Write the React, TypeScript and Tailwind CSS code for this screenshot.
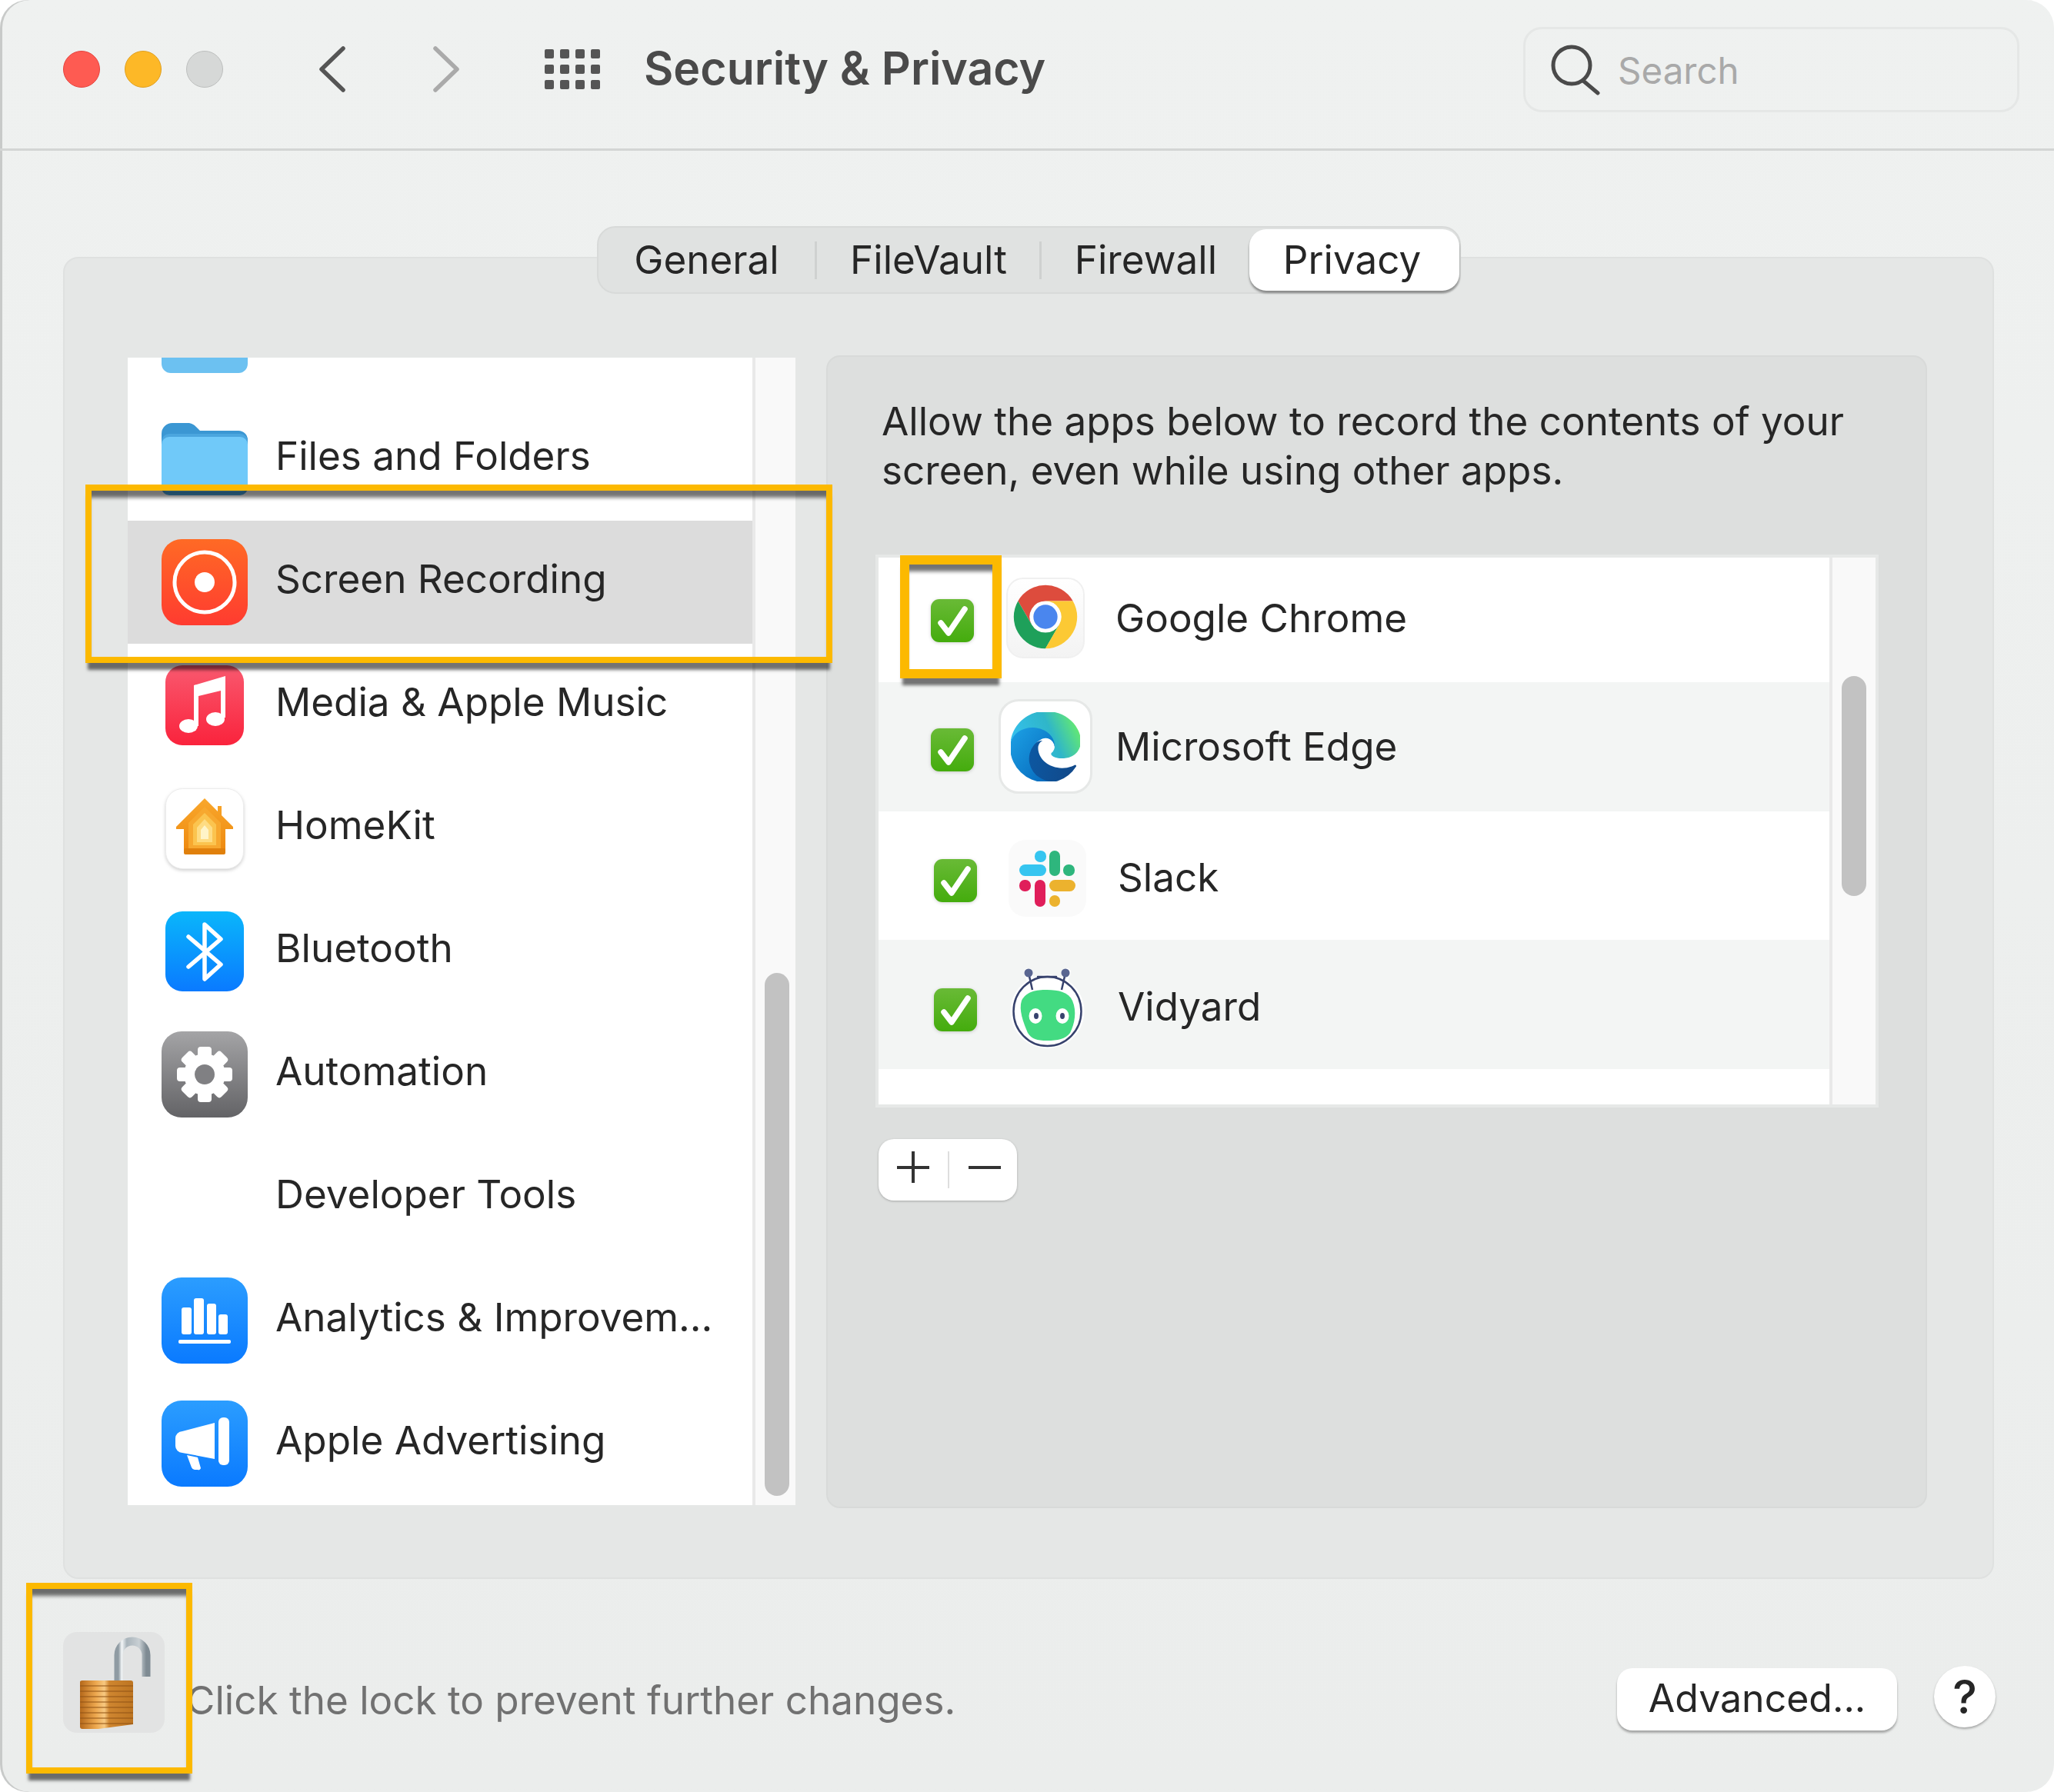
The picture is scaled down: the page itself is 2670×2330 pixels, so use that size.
import type { ReactNode } from "react";

const FolderIcon = () => (
  <svg width="112" height="94" viewBox="0 0 112 94">
    <path d="M0 14a14 14 0 0 1 14-14h20c6 0 9 3 13 7l3 3h50a12 12 0 0 1 12 12v60H0Z" fill="#3b97d3" />
    <path d="M0 24a10 10 0 0 1 10-10h92a10 10 0 0 1 10 10v60a10 10 0 0 1-10 10H10A10 10 0 0 1 0 84Z" fill="#4ba6df" />
    <path d="M0 28a10 10 0 0 1 10-10h92a10 10 0 0 1 10 10v53a8 8 0 0 1-8 8H8a8 8 0 0 1-8-8Z" fill="#70c9f9" />
  </svg>
);

const RecordIcon = () => (
  <svg width="112" height="112" viewBox="0 0 112 112">
    <defs>
      <linearGradient id="rec" x1="0" y1="0" x2="0" y2="1">
        <stop offset="0" stopColor="#ff6a25" />
        <stop offset="1" stopColor="#ff3b30" />
      </linearGradient>
    </defs>
    <rect width="112" height="112" rx="26" fill="url(#rec)" />
    <circle cx="56" cy="56" r="39" fill="none" stroke="#fff" strokeWidth="5" />
    <circle cx="56" cy="56" r="13" fill="#fff" />
  </svg>
);

const MusicIcon = () => (
  <svg width="102" height="104" viewBox="0 0 102 104">
    <defs>
      <linearGradient id="music" x1="0" y1="0" x2="0" y2="1">
        <stop offset="0" stopColor="#f9596f" />
        <stop offset="1" stopColor="#fa233c" />
      </linearGradient>
    </defs>
    <rect width="102" height="104" rx="22" fill="url(#music)" />
    <path d="M37 26 78 14v54h-6V33L43 40v39h-6Z" fill="#fff" />
    <ellipse cx="30" cy="79" rx="12" ry="9" fill="#fff" />
    <ellipse cx="65" cy="70" rx="12" ry="9" fill="#fff" />
  </svg>
);

const HomeIcon = () => (
  <svg width="102" height="105" viewBox="0 0 102 105" className="drop-shadow-[0_2px_2px_rgba(0,0,0,0.18)]">
    <defs>
      <linearGradient id="house" x1="0" y1="0" x2="0" y2="1">
        <stop offset="0" stopColor="#f9a72c" />
        <stop offset="1" stopColor="#ee8a10" />
      </linearGradient>
    </defs>
    <rect x="0.5" y="0.5" width="101" height="104" rx="22" fill="#fff" stroke="#ececec" />
    <path d="M51 13 68 30V23h5v12l15 15v3H78v27H24V53H14v-3Z" fill="url(#house)" />
    <path d="M51 24 72 45v33H30V45Z" fill="#f7a82f" />
    <path d="M51 32 66 47v27H36V47Z" fill="#fbc44f" />
    <path d="M51 40 61 51v19H41V51Z" fill="#fedc83" />
    <path d="M51 48 56 54v12H46V54Z" fill="#fff4c8" />
    <rect x="24" y="78" width="54" height="8" rx="2" fill="#e0800c" />
  </svg>
);

const BluetoothIcon = () => (
  <svg width="102" height="104" viewBox="0 0 102 104">
    <defs>
      <linearGradient id="bt" x1="0" y1="0" x2="0" y2="1">
        <stop offset="0" stopColor="#0ab6fb" />
        <stop offset="1" stopColor="#0a7aff" />
      </linearGradient>
    </defs>
    <rect width="102" height="104" rx="22" fill="url(#bt)" />
    <path d="M30 33 72 69 51 88V17l21 19-42 36" fill="none" stroke="#fff" strokeWidth="5.5" strokeLinecap="round" strokeLinejoin="round" />
  </svg>
);

const GearIcon = () => (
  <svg width="112" height="112" viewBox="0 0 112 112">
    <defs>
      <linearGradient id="gear" x1="0" y1="0" x2="0" y2="1">
        <stop offset="0" stopColor="#a4a4a6" />
        <stop offset="1" stopColor="#636366" />
      </linearGradient>
    </defs>
    <rect width="112" height="112" rx="26" fill="url(#gear)" />
    {[0, 45, 90, 135, 180, 225, 270, 315].map((deg) => (
      <rect key={deg} x="47" y="20" width="18" height="24" rx="4" fill="#fff" transform={`rotate(${deg} 56 56)`} />
    ))}
    <circle cx="56" cy="56" r="27" fill="#fff" />
    <circle cx="56" cy="56" r="13" fill="#808083" />
  </svg>
);

const AnalyticsIcon = () => (
  <svg width="112" height="112" viewBox="0 0 112 112">
    <defs>
      <linearGradient id="stats" x1="0" y1="0" x2="0" y2="1">
        <stop offset="0" stopColor="#2b9dff" />
        <stop offset="1" stopColor="#0a7aff" />
      </linearGradient>
    </defs>
    <rect width="112" height="112" rx="26" fill="url(#stats)" />
    <rect x="26" y="39" width="13" height="35" rx="3" fill="#fff" />
    <rect x="42" y="27" width="13" height="47" rx="3" fill="#fff" />
    <rect x="59" y="34" width="12" height="40" rx="3" fill="#fff" />
    <rect x="74" y="48" width="12" height="26" rx="3" fill="#fff" />
    <rect x="22" y="81" width="68" height="5" rx="2" fill="#fff" />
  </svg>
);

const MegaphoneIcon = () => (
  <svg width="112" height="112" viewBox="0 0 112 112">
    <defs>
      <linearGradient id="ads" x1="0" y1="0" x2="0" y2="1">
        <stop offset="0" stopColor="#2b9dff" />
        <stop offset="1" stopColor="#0a7aff" />
      </linearGradient>
    </defs>
    <rect width="112" height="112" rx="26" fill="url(#ads)" />
    <path d="M27 40 69 29v47L27 68a9 9 0 0 1-9-9v-10a9 9 0 0 1 9-9Z" fill="#fff" />
    <rect x="74" y="22" width="14" height="62" rx="6" fill="#fff" />
    <path d="M33 71 47 74l4 14a3 3 0 0 1-4 2h-4a5 5 0 0 1-4-3Z" fill="#fff" />
  </svg>
);

const Check = ({ className }: { className: string }) => (
  <svg width="56" height="56" viewBox="0 0 56 56" className={`shrink-0 drop-shadow-[0_1px_2px_rgba(0,0,0,0.18)] ${className}`}>
    <defs>
      <linearGradient id="chk" x1="0" y1="0" x2="0" y2="1">
        <stop offset="0" stopColor="#69ba36" />
        <stop offset="1" stopColor="#44ac0d" />
      </linearGradient>
    </defs>
    <rect width="56" height="56" rx="11" fill="url(#chk)" />
    <path d="M13 31 23 44 44 13" fill="none" stroke="#fff" strokeWidth="7.5" strokeLinecap="round" strokeLinejoin="round" />
  </svg>
);

const redSlice = "M86.4 29A42 42 0 0 0 13.6 29L31.8 60.5A21 21 0 0 1 50 29Z";

const ChromeIcon = () => (
  <div className="flex h-[105px] w-[102px] items-center justify-center rounded-[22px] border-2 border-[#f0f0f0] bg-gradient-to-b from-white to-[#f3f3f3] pb-[4px]">
    <svg width="98" height="98" viewBox="0 0 100 100">
      <path d={redSlice} fill="#dd4c3d" />
      <path d={redSlice} fill="#1ea05a" transform="rotate(-120 50 50)" />
      <path d={redSlice} fill="#fcc934" transform="rotate(120 50 50)" />
      <circle cx="50" cy="50" r="20.5" fill="#fff" />
      <circle cx="50" cy="50" r="16" fill="#4a86ee" />
    </svg>
  </div>
);

const EdgeIcon = () => (
  <div className="flex h-[123px] w-[122px] items-center justify-center rounded-[26px] border-[3px] border-[#e6e8e7] bg-white">
    <svg width="90" height="90" viewBox="0 0 256 256">
      <defs>
        <linearGradient id="edgeA" x1="0" y1="0" x2="1" y2="0.2">
          <stop offset="0" stopColor="#0c59a4" />
          <stop offset="1" stopColor="#114a8b" />
        </linearGradient>
        <linearGradient id="edgeB" x1="0.1" y1="0.1" x2="0.9" y2="0.9">
          <stop offset="0" stopColor="#1b9de2" />
          <stop offset="1" stopColor="#0669bc" />
        </linearGradient>
        <linearGradient id="edgeC" x1="0" y1="0.7" x2="1" y2="0.4">
          <stop offset="0" stopColor="#35c1f1" />
          <stop offset="0.6" stopColor="#2fb6c9" />
          <stop offset="1" stopColor="#66eb6e" />
        </linearGradient>
      </defs>
      <path d="M235.7 195.5a93.7 93.7 0 0 1-10.5 4.7 101.9 101.9 0 0 1-35.9 6.5c-47.3 0-88.5-32.6-88.5-74.3a31.5 31.5 0 0 1 16.4-27.3c-42.8 1.8-53.8 46.4-53.8 72.5 0 73.9 68.1 81.4 82.8 81.4 7.9 0 19.8-2.3 27-4.6l1.3-.4a128.3 128.3 0 0 0 66.6-52.8 4 4 0 0 0-5.4-5.7Z" fill="url(#edgeA)" />
      <path d="M105.7 241.4a79.2 79.2 0 0 1-22.7-21.3 80.7 80.7 0 0 1 29.5-120c3.2-1.5 8.7-4.2 15.9-4.1a33.1 33.1 0 0 1 26.3 13.3 32.6 32.6 0 0 1 6.5 19.1c0-.2 25-81.5-81.9-81.5C33.9 47 -3 89.7-3 127a133.3 133.3 0 0 0 12.4 57.3 131.1 131.1 0 0 0 160.1 68.7 77.3 77.3 0 0 1-63.8-11.6Z" fill="url(#edgeB)" />
      <path d="M152.3 148.8c-.8 1.1-3.4 2.6-3.4 5.8 0 2.7 1.7 5.3 4.9 7.4 14.7 10.3 42.5 8.9 42.6 8.9a61.1 61.1 0 0 0 31-8.6 62.9 62.9 0 0 0 31.2-54.3c.3-23-8.2-38.3-11.6-45C225.3 20.5 178.4-4 127.9-4 56.8-4-1.2 53.1-2.1 124.3c.5-37.4 37.7-67.6 82-67.6 3.6 0 24.1.3 43.1 10.3a74.5 74.5 0 0 1 31.7 30c6.3 11 7.4 24.8 7.4 30.3s-2.8 13.7-8.1 20.5Z" fill="url(#edgeC)" />
    </svg>
  </div>
);

const SlackIcon = () => (
  <div className="flex h-[100px] w-[101px] items-center justify-center rounded-[22px] bg-[#fafafa]">
    <svg width="73" height="73" viewBox="0 0 73 73">
      <rect x="20" y="0" width="15" height="15" rx="7" fill="#36c5f0" />
      <rect x="0" y="18" width="35" height="15" rx="7.5" fill="#36c5f0" />
      <rect x="39" y="0" width="14" height="33" rx="7" fill="#2eb67d" />
      <rect x="57" y="18" width="15" height="15" rx="7" fill="#2eb67d" />
      <rect x="0" y="38" width="15" height="15" rx="7" fill="#e01e5a" />
      <rect x="20" y="38" width="14" height="35" rx="7" fill="#e01e5a" />
      <rect x="39" y="38" width="34" height="15" rx="7.5" fill="#ecb22e" />
      <rect x="39" y="58" width="14" height="15" rx="7" fill="#ecb22e" />
    </svg>
  </div>
);

const VidyardIcon = () => (
  <svg width="97" height="110" viewBox="0 0 97 110">
    <ellipse cx="48.5" cy="61" rx="48" ry="48" fill="#fff" />
    <path d="M23 10 30 30M74 10 67 30" stroke="#fff" strokeWidth="10" strokeLinecap="round" />
    <ellipse cx="48.5" cy="61" rx="44" ry="45" fill="none" stroke="#37426d" strokeWidth="2.5" />
    <path d="M36 16h24" stroke="#37426d" strokeWidth="2.5" strokeLinecap="round" />
    <path d="M15 47c6-12 19-14 33-14 15 0 28 3 33 14 6 14 3 30-3 42-6 8-16 10-30 10-13 0-20-2-25-10-6-14-12-30-8-42Z" fill="#43db82" />
    <path d="M29 33 24 11M67 33 72 11" stroke="#37426d" strokeWidth="2.5" />
    <circle cx="24" cy="11" r="5.5" fill="#5a6691" />
    <circle cx="72" cy="11" r="5.5" fill="#5a6691" />
    <ellipse cx="33" cy="67" rx="8.5" ry="10" fill="#fff" />
    <ellipse cx="68" cy="67" rx="8.5" ry="10" fill="#fff" />
    <ellipse cx="34" cy="67" rx="3" ry="4" fill="#37426d" />
    <ellipse cx="68" cy="67" rx="3" ry="4" fill="#37426d" />
  </svg>
);

const LockIcon = () => (
  <svg width="132" height="131" viewBox="0 0 132 131">
    <defs>
      <linearGradient id="shackle" x1="0" y1="0" x2="1" y2="0">
        <stop offset="0" stopColor="#8f9ba3" />
        <stop offset="0.12" stopColor="#f4f7f8" />
        <stop offset="0.3" stopColor="#a9b4bb" />
        <stop offset="0.75" stopColor="#c9d0d4" />
        <stop offset="1" stopColor="#7f8b93" />
      </linearGradient>
      <linearGradient id="brass" x1="0" y1="0" x2="1" y2="0">
        <stop offset="0" stopColor="#b5681a" />
        <stop offset="0.3" stopColor="#eda84f" />
        <stop offset="0.46" stopColor="#f7c880" />
        <stop offset="0.55" stopColor="#cf8630" />
        <stop offset="1" stopColor="#bd7522" />
      </linearGradient>
    </defs>
    <path d="M72 64V30a18 18 0 0 1 36 0v28" fill="none" stroke="url(#shackle)" strokeWidth="11" />
    <path d="M22 65q0-2 3-2h63q3 0 3 3v54l-45 6H25q-3 0-3-3Z" fill="url(#brass)" />
    {[70, 77, 84, 91, 98, 105, 112, 119].map((y) => (
      <path key={y} d={`M22 ${y}H91`} stroke="#8f5213" strokeOpacity="0.5" strokeWidth="2" />
    ))}
  </svg>
);

type SidebarRow = { label: string; icon: ReactNode | null; selected?: boolean };

const sidebarRows: SidebarRow[] = [
  { label: "Files and Folders", icon: <FolderIcon /> },
  { label: "Screen Recording", icon: <RecordIcon />, selected: true },
  { label: "Media & Apple Music", icon: <MusicIcon /> },
  { label: "HomeKit", icon: <HomeIcon /> },
  { label: "Bluetooth", icon: <BluetoothIcon /> },
  { label: "Automation", icon: <GearIcon /> },
  { label: "Developer Tools", icon: null },
  { label: "Analytics & Improvem...", icon: <AnalyticsIcon /> },
  { label: "Apple Advertising", icon: <MegaphoneIcon /> },
];

const Sidebar = () => (
  <div className="mt-[3px] flex h-[1492px] w-[868px] shrink-0">
    <div className="w-[812px] overflow-hidden bg-white">
      <div className="h-[52px] pl-[44px]">
        <div className="h-[20px] w-[112px] rounded-b-[12px] bg-[#6cc1f1]" />
      </div>
      {sidebarRows.map((row) => (
        <div key={row.label} className={`flex h-[160px] items-center pl-[44px] ${row.selected ? "bg-[#dcdcdc]" : ""}`}>
          <div className="flex w-[112px] shrink-0 justify-center">{row.icon}</div>
          <span className="ml-[36px] pb-[10px] whitespace-nowrap text-[#262626]">{row.label}</span>
        </div>
      ))}
    </div>
    <div className="w-[56px] border-l-[4px] border-[#e9e9e9] bg-[#f9f9f9] pt-[800px] pl-[12px]">
      <div className="h-[680px] w-[32px] rounded-full bg-[#c2c2c2]" />
    </div>
  </div>
);

const AppList = () => (
  <div className="mt-[78px] flex h-[719px] w-[1304px] border-[4px] border-[#e6e8e7]">
    <div className="w-[1236px] bg-white text-[#262626]">
      <div className="flex h-[162px]">
        <Check className="mt-[54px] ml-[68px]" />
        <div className="mt-[26px] ml-[42px]"><ChromeIcon /></div>
        <span className="mt-[46px] ml-[40px]">Google Chrome</span>
      </div>
      <div className="flex h-[168px] bg-[#f3f5f4]">
        <Check className="mt-[60px] ml-[68px]" />
        <div className="mt-[22px] ml-[32px]"><EdgeIcon /></div>
        <span className="mt-[51px] ml-[30px]">Microsoft Edge</span>
      </div>
      <div className="flex h-[167px]">
        <Check className="mt-[62px] ml-[72px]" />
        <div className="mt-[37px] ml-[41px]"><SlackIcon /></div>
        <span className="mt-[53px] ml-[41px]">Slack</span>
      </div>
      <div className="flex h-[168px] bg-[#f3f5f4]">
        <Check className="mt-[63px] ml-[72px]" />
        <div className="mt-[32px] ml-[43px]"><VidyardIcon /></div>
        <span className="mt-[54px] ml-[43px]">Vidyard</span>
      </div>
    </div>
    <div className="flex-1 border-l-[4px] border-[#e9e9e9] bg-[#f9f9f9] pt-[154px] pl-[12px]">
      <div className="h-[286px] w-[32px] rounded-full bg-[#c2c2c2]" />
    </div>
  </div>
);

const tabClass = "flex h-[49px] items-center justify-center pb-[3px]";

const Tabs = () => (
  <div className="mx-auto -mt-[42px] flex h-[88px] w-[1123px] items-center rounded-[24px] border-[2px] border-[#d8dad9] bg-[#e0e2e1] text-[#262626]">
    <div className={`${tabClass} w-[283px]`}>General</div>
    <div className="h-[49px] w-[3px] bg-[#cfd1d0]" />
    <div className={`${tabClass} w-[290px]`}>FileVault</div>
    <div className="h-[49px] w-[3px] bg-[#cfd1d0]" />
    <div className={`${tabClass} w-[271px]`}>Firewall</div>
    <div className={`${tabClass} h-[80px] w-[273px] rounded-[22px] bg-white pr-[6px] shadow-[0_3px_3px_rgba(0,0,0,0.4)]`}>Privacy</div>
  </div>
);

const Footer = () => (
  <div className="flex pt-[69px] pr-[76px] pl-[82px]">
    <div className="h-[131px] w-[132px] rounded-[18px] bg-[#e2e3e3]">
      <LockIcon />
    </div>
    <span className="mt-[56px] ml-[28px] text-[#717171]">Click the lock to prevent further changes.</span>
    <button className="mt-[47px] ml-auto h-[81px] w-[364px] rounded-[20px] bg-white pb-[4px] text-[50px] text-[#262626] shadow-[0_3px_3px_rgba(0,0,0,0.3)]">
      Advanced...
    </button>
    <button className="mt-[44px] ml-[48px] h-[80px] w-[80px] rounded-full bg-white text-[60px] font-medium text-[#262626] shadow-[0_2px_3px_rgba(0,0,0,0.3)]">
      ?
    </button>
  </div>
);

const highlightClass =
  "pointer-events-none absolute border-[#fcb900] shadow-[0_12px_4px_-3px_rgba(0,0,0,0.55),inset_0_12px_5px_-3px_rgba(0,0,0,0.55)]";

export default function App() {
  return (
    <div className="relative h-[2330px] w-[2670px] bg-white [font-family:Inter,'Noto_Sans',sans-serif] text-[51.2px] leading-[64px]">
      <div className="flex h-full flex-col overflow-hidden rounded-[36px] bg-gradient-to-b from-[#eff1f0] to-[#ebedec] shadow-[inset_3px_0_0_#c8cac9]">
        <header className="flex h-[196px] shrink-0 items-center border-b-[3px] border-[#d3d5d4] pb-[14px] pl-[82px]">
          <div className="h-[48px] w-[48px] rounded-full border border-[#e5443e] bg-[#fe5b52]" />
          <div className="ml-[32px] h-[48px] w-[48px] rounded-full border border-[#e0a021] bg-[#fdb827]" />
          <div className="ml-[32px] h-[48px] w-[48px] rounded-full border border-[#bdbfbe] bg-[#d6d8d7]" />
          <svg width="36" height="60" viewBox="0 0 36 60" className="ml-[124px]">
            <path d="M32 3 4 30 32 57" fill="none" stroke="#555" strokeWidth="5.5" strokeLinecap="round" strokeLinejoin="round" />
          </svg>
          <svg width="36" height="60" viewBox="0 0 36 60" className="ml-[112px]">
            <path d="M4 3 32 30 4 57" fill="none" stroke="#aaa" strokeWidth="5.5" strokeLinecap="round" strokeLinejoin="round" />
          </svg>
          <svg width="72" height="52" viewBox="0 0 72 52" className="ml-[110px]" fill="#555">
            {[0, 20, 40].map((y) =>
              [0, 20, 40, 60].map((x) => <rect key={`${x}-${y}`} x={x} y={y} width="12" height="12" rx="2" />),
            )}
          </svg>
          <h1 className="ml-[57px] pb-[2px] text-[59px] font-semibold text-[#4a4a4a]">Security &amp; Privacy</h1>
          <div className="mt-[2px] mr-[45px] ml-auto flex h-[111px] w-[645px] items-center rounded-[24px] border-[3px] border-[#e5e7e6] pl-[32px] text-[47.5px] text-[#a9a9a9]">
            <svg width="66" height="66" viewBox="0 0 66 66" fill="none" stroke="#4a4a4a" strokeWidth="5">
              <circle cx="28" cy="27" r="24" />
              <path d="M43 47 62 63" strokeLinecap="round" />
            </svg>
            <span className="ml-[22px] pt-[3px]">Search</span>
          </div>
        </header>

        <main className="flex-1 pt-[138px]">
          <section className="mx-[82px] h-[1719px] w-[2510px] rounded-[20px] border-[2px] border-[#dfe1e0] bg-[#e5e7e6]">
            <Tabs />
            <div className="flex pt-[80px] pl-[82px]">
              <Sidebar />
              <div className="ml-[40px] h-[1499px] w-[1431px] rounded-[18px] border-[2px] border-[#d8dad9] bg-[#dddfde] px-[62px] pt-[51px] text-[#262626]">
                <p className="ml-[8px]">
                  <span className="block whitespace-nowrap">Allow the apps below to record the contents of your</span>
                  <span className="block whitespace-nowrap">screen, even while using other apps.</span>
                </p>
                <AppList />
                <div className="mt-[41px] ml-[4px] flex h-[80px] w-[180px] items-center rounded-[20px] bg-white shadow-[0_1px_3px_rgba(0,0,0,0.25)]">
                  <svg width="90" height="80" viewBox="0 0 90 80" fill="none" stroke="#333" strokeWidth="4">
                    <path d="M24 37H66M45 16V57" />
                  </svg>
                  <div className="h-[48px] w-[2px] bg-[#dedede]" />
                  <svg width="88" height="80" viewBox="0 0 88 80" fill="none" stroke="#333" strokeWidth="4">
                    <path d="M25 37H67" />
                  </svg>
                </div>
              </div>
            </div>
          </section>
          <Footer />
        </main>
      </div>

      <div className={`${highlightClass} top-[630px] left-[111px] h-[232px] w-[971px] border-[8px]`} />
      <div className={`${highlightClass} top-[722px] left-[1170px] h-[160px] w-[132px] border-[12px]`} />
      <div className={`${highlightClass} top-[2058px] left-[34px] h-[248px] w-[216px] border-[8px]`} />
    </div>
  );
}
